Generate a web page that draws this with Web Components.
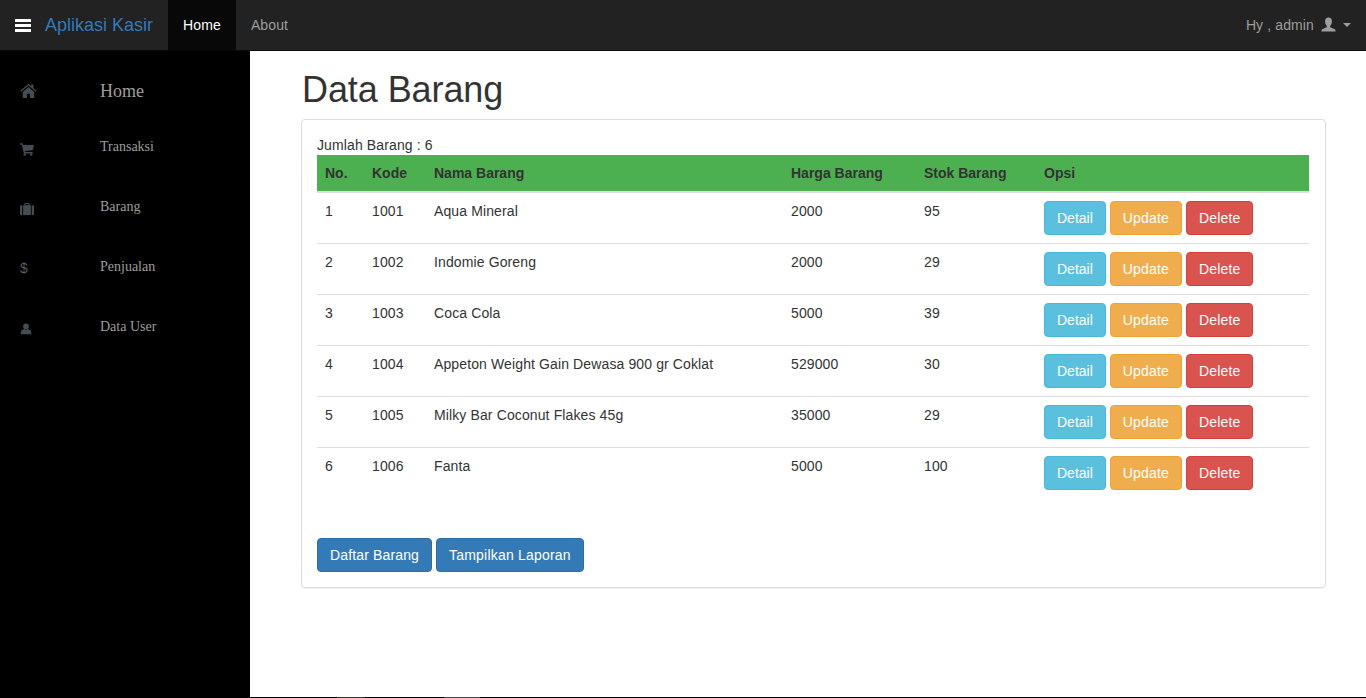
<!DOCTYPE html>
<html>
<head>
<meta charset="utf-8">
<title>Data Barang</title>
<style>
    html, body { margin: 0; height: 100%; }
    body {
        font-family: "Liberation Sans", Arial, sans-serif;
        font-size: 14px;
        line-height: 20px;
        color: #333;
        background: #fff;
        overflow: hidden;
    }
</style>
</head>
<body>
<app-shell>
    <top-bar slot="top"></top-bar>
    <side-menu slot="side"></side-menu>
    <data-page>
        <item-table></item-table>
    </data-page>
</app-shell>

<script>
// glyphs drawn on a 16 box, same shapes as the glyphicons set
const ICONS = {
    home: '<path d="M8 1.600 .4 8.200l.8.900L8 3.300l6.800 5.800.8-.9-3-2.600V2.400h-2v1.500z"/><path d="M8 4.600 2.600 9.300V15h3.900v-4h3V15h3.900V9.300z"/>',
    cart: '<path d="M0 1.500h3l.6 2H16l-1.600 5.800-8.800 1 .4 1.200H14.500v1.500H4.500L2 3H0z"/><circle cx="5.400" cy="14.300" r="1.400"/><circle cx="12.800" cy="14.300" r="1.400"/>',
    briefcase: '<path d="M5 3.600V2.400C5 1.600 5.600 1 6.400 1h3.200c.8 0 1.400.6 1.400 1.400v1.200H9.700V2.500c0-.2-.1-.3-.3-.3H6.600c-.2 0-.3.1-.3.300v1.100z"/><path d="M3.600 3.600h8.800V15H3.600z"/><path d="M0 5c0-.8.600-1.400 1.400-1.400h1.200V15H1.400C.6 15 0 14.400 0 13.600zM16 5c0-.8-.6-1.400-1.400-1.400h-1.200V15h1.200c.8 0 1.400-.6 1.400-1.400z"/>',
    person: '<circle cx="8" cy="4.600" r="3.800"/><path d="M1 15v-2.600C1 10 3.400 8.400 5.600 8c.7.6 1.500.9 2.400.9s1.700-.3 2.400-.9c2.200.4 4.600 2 4.600 4.400V15z"/>',
    user: '<path d="M8 .5c2.300 0 3.700 1.700 3.700 4.200 0 2-.8 3.700-1.900 4.600v1.100c0 .7 1 1 2.400 1.500 1.900.7 3.300 1.300 3.300 2.100v1.500H.5V14c0-.8 1.400-1.400 3.300-2.100 1.400-.5 2.400-.8 2.400-1.500V9.300C5.100 8.400 4.300 6.700 4.300 4.700 4.300 2.200 5.700.5 8 .5z"/>'
};
const icon = (name, size, color) =>
    `<svg width="${size}" height="${size}" viewBox="0 0 16 16" fill="${color}" aria-hidden="true">${ICONS[name]}</svg>`;

class AppShell extends HTMLElement {
    constructor() {
        super();
        this.attachShadow({ mode: 'open' });
        this.shadowRoot.innerHTML = `
            <style>
                :host { display: flex; flex-direction: column; height: 698px; }
                .body { flex: 1; display: flex; min-height: 0; }
                ::slotted(side-menu) { flex: 0 0 250px; }
                .main { flex: 1; min-width: 0; }
                /* the dark strip along the bottom edge of the window */
                .edge {
                    flex: 0 0 1px;
                    background: linear-gradient(90deg, #000 337px, #3a3a20 337px, #333 365px, #000 365px, #000 444px, #444 444px, #444 480px, #000 480px);
                }
            </style>
            <slot name="top"></slot>
            <div class="body">
                <slot name="side"></slot>
                <div class="main"><slot></slot></div>
            </div>
            <div class="edge"></div>
        `;
    }
}

class TopBar extends HTMLElement {
    constructor() {
        super();
        this.attachShadow({ mode: 'open' });
        this.shadowRoot.innerHTML = `
            <style>
                :host {
                    display: flex;
                    flex: 0 0 auto;
                    height: 50px;
                    background: #222;
                    border-bottom: 1px solid #080808;
                    color: #9d9d9d;
                    letter-spacing: .12px;
                }
                .burger {
                    display: flex;
                    flex-direction: column;
                    justify-content: center;
                    gap: 2px;
                    margin-left: 15px;
                    width: 16px;
                }
                .burger i { display: block; height: 3px; background: #fff; }
                .brand {
                    margin-left: 14px;
                    margin-right: 15px;
                    font-size: 18px;
                    line-height: 50px;
                    color: #337ab7;
                    letter-spacing: 0;
                }
                .link { padding: 0 15px; line-height: 50px; }
                .link.active { color: #fff; background: #080808; }
                .user {
                    margin-left: auto;
                    margin-right: 15px;
                    display: flex;
                    align-items: center;
                }
                .user span { margin-right: 7px; }
                .user svg { margin-right: 7px; margin-top: -2px; }
                .caret {
                    width: 0;
                    height: 0;
                    border-top: 4px solid #9d9d9d;
                    border-left: 4px solid transparent;
                    border-right: 4px solid transparent;
                }
            </style>
            <div class="burger"><i></i><i></i><i></i></div>
            <div class="brand">Aplikasi Kasir</div>
            <div class="link active">Home</div>
            <div class="link">About</div>
            <div class="user">
                <span>Hy , admin</span>
                ${icon('user', 15, '#9d9d9d')}
                <div class="caret"></div>
            </div>
        `;
    }
}

class SideMenu extends HTMLElement {
    constructor() {
        super();
        this.attachShadow({ mode: 'open' });
        const items = [
            ['home', 17, 'Home', 'big'],
            ['cart', 14, 'Transaksi', ''],
            ['briefcase', 14, 'Barang', ''],
            ['dollar', 0, 'Penjualan', ''],
            ['person', 12, 'Data User', '']
        ];
        this.shadowRoot.innerHTML = `
            <style>
                :host {
                    display: block;
                    background: #000;
                    color: #9d9d9d;
                    font-family: "Liberation Serif", "Times New Roman", serif;
                    padding-top: 15px;
                }
                .item {
                    display: flex;
                    align-items: center;
                    height: 60px;
                    padding-left: 20px;
                }
                .item.big { height: 51px; font-size: 18px; }
                .item.big .label { margin-top: -2px; }
                .ic { width: 80px; display: flex; align-items: center; }
                .item.big .ic { margin-top: -3px; }
                .item:not(.big) .ic { margin-top: 3px; }
                .dollar { font: 14px/16px "Liberation Sans", sans-serif; color: #565c60; margin-top: -2px; }
            </style>
            ${items.map(([ic, size, label, cls]) => `
                <div class="item ${cls}">
                    <div class="ic">${ic === 'dollar'
                        ? '<span class="dollar">$</span>'
                        : icon(ic, size, '#454d54')}</div>
                    <div class="label">${label}</div>
                </div>
            `).join('')}
        `;
    }
}

class DataPage extends HTMLElement {
    constructor() {
        super();
        this.attachShadow({ mode: 'open' });
        this.shadowRoot.innerHTML = `
            <style>
                :host { display: block; padding: 0 40px 0 51px; }
                h1 {
                    margin: 19px 0 9px 1px;
                    font-size: 36px;
                    font-weight: 500;
                    line-height: 40px;
                    letter-spacing: -.08px;
                    color: #333;
                }
                .panel {
                    border: 1px solid #ddd;
                    border-radius: 4px;
                    box-shadow: 0 1px 1px rgba(0,0,0,.05);
                    padding: 15px;
                }
                .count { height: 20px; letter-spacing: .12px; }
                .actions { display: flex; gap: 4px; margin-top: 40px; }
                .btn {
                    padding: 6px 12px;
                    line-height: 20px;
                    color: #fff;
                    background: #337ab7;
                    border: 1px solid #2e6da4;
                    border-radius: 4px;
                    letter-spacing: .14px;
                }
                .btn.wide { letter-spacing: .21px; }
            </style>
            <h1>Data Barang</h1>
            <div class="panel">
                <div class="count">Jumlah Barang : 6</div>
                <slot></slot>
                <div class="actions">
                    <div class="btn">Daftar Barang</div>
                    <div class="btn wide">Tampilkan Laporan</div>
                </div>
            </div>
        `;
    }
}

class ItemTable extends HTMLElement {
    constructor() {
        super();
        this.attachShadow({ mode: 'open' });
        const rows = [
            [1, 1001, 'Aqua Mineral', 2000, 95],
            [2, 1002, 'Indomie Goreng', 2000, 29],
            [3, 1003, 'Coca Cola', 5000, 39],
            [4, 1004, 'Appeton Weight Gain Dewasa 900 gr Coklat', 529000, 30],
            [5, 1005, 'Milky Bar Coconut Flakes 45g', 35000, 29],
            [6, 1006, 'Fanta', 5000, 100]
        ];
        this.shadowRoot.innerHTML = `
            <style>
                :host { display: block; margin-right: 1px; }
                table { width: 100%; border-collapse: separate; border-spacing: 0; table-layout: fixed; }
                th {
                    height: 38px;
                    padding: 0 8px;
                    box-sizing: border-box;
                    text-align: left;
                    background: #4caf50;
                    background-clip: padding-box;
                    border-bottom: 2px solid #ddd;
                }
                td {
                    height: 51px;
                    padding: 8px;
                    box-sizing: border-box;
                    vertical-align: top;
                    border-bottom: 1px solid #ddd;
                    letter-spacing: .12px;
                }
                tr:last-child td { border-bottom: 0; height: 50px; }
                .opsi { display: flex; gap: 4px; }
                .btn {
                    padding: 6px 12px;
                    line-height: 20px;
                    color: #fff;
                    border: 1px solid;
                    border-radius: 4px;
                    letter-spacing: .17px;
                }
                .info { background: #5bc0de; border-color: #46b8da; letter-spacing: 0; }
                .warning { background: #f0ad4e; border-color: #eea236; }
                .danger { background: #d9534f; border-color: #d43f3a; }
            </style>
            <table>
                <colgroup>
                    <col style="width:47px"><col style="width:62px"><col style="width:357px">
                    <col style="width:133px"><col style="width:120px"><col>
                </colgroup>
                <thead>
                    <tr><th>No.</th><th>Kode</th><th>Nama Barang</th><th>Harga Barang</th><th>Stok Barang</th><th>Opsi</th></tr>
                </thead>
                <tbody>
                    ${rows.map(r => `
                        <tr>
                            ${r.map(c => `<td>${c}</td>`).join('')}
                            <td><div class="opsi">
                                <div class="btn info">Detail</div>
                                <div class="btn warning">Update</div>
                                <div class="btn danger">Delete</div>
                            </div></td>
                        </tr>
                    `).join('')}
                </tbody>
            </table>
        `;
    }
}

customElements.define('app-shell', AppShell);
customElements.define('top-bar', TopBar);
customElements.define('side-menu', SideMenu);
customElements.define('data-page', DataPage);
customElements.define('item-table', ItemTable);
</script>
</body>
</html>
